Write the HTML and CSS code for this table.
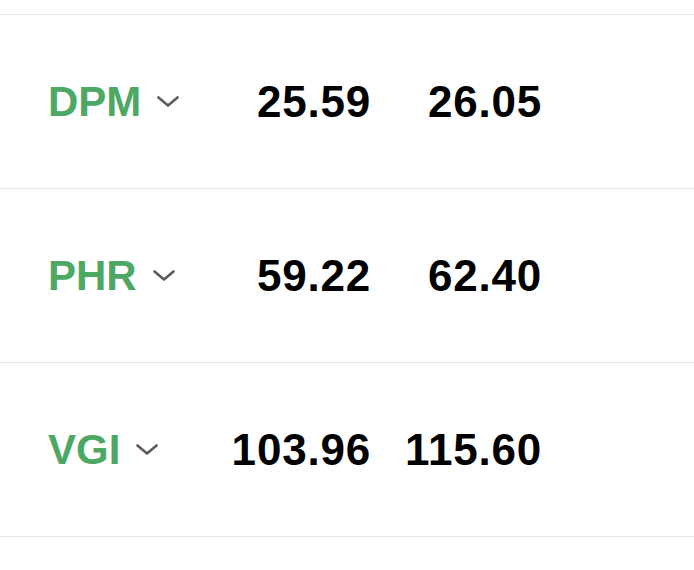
FILE: index.html
```html
<!DOCTYPE html>
<html>
<head>
<meta charset="utf-8">
<link rel="stylesheet" href="styles.css">
</head>
<body>
<div class="list">
  <div class="row">
    <div class="ticker"><span class="sym">DPM</span><svg class="chev" viewBox="0 0 22 11" width="22" height="11"><path d="M1.5 1.5 L11 9.5 L20.5 1.5" /></svg></div>
    <div class="num">25.59</div>
    <div class="num">26.05</div>
  </div>
  <div class="row">
    <div class="ticker"><span class="sym">PHR</span><svg class="chev" viewBox="0 0 22 11" width="22" height="11"><path d="M1.5 1.5 L11 9.5 L20.5 1.5" /></svg></div>
    <div class="num">59.22</div>
    <div class="num">62.40</div>
  </div>
  <div class="row">
    <div class="ticker"><span class="sym">VGI</span><svg class="chev" viewBox="0 0 22 11" width="22" height="11"><path d="M1.5 1.5 L11 9.5 L20.5 1.5" /></svg></div>
    <div class="num">103.96</div>
    <div class="num">115.60</div>
  </div>
</div>
</body>
</html>
```

FILE: styles.css
```css
html, body {
  margin: 0;
  padding: 0;
  background: #ffffff;
}
body {
  font-family: "Liberation Sans", Arial, sans-serif;
}
.list {
  padding-top: 14px;
}
.row {
  display: grid;
  grid-template-columns: 150px 173px 171px;
  align-items: center;
  height: 173px;
  padding-left: 48px;
  border-top: 1px solid #e6e6e6;
}
.row:last-child {
  border-bottom: 1px solid #e6e6e6;
}
.ticker {
  display: flex;
  align-items: center;
  gap: 16px;
}
.sym {
  color: #4ca862;
  font-weight: 700;
  font-size: 42px;
  line-height: 1;
}
.chev {
  fill: none;
  stroke: #5c5c60;
  stroke-width: 2.6;
  stroke-linecap: round;
  stroke-linejoin: round;
}
.num {
  text-align: right;
  color: #000000;
  font-weight: 700;
  font-size: 44px;
  letter-spacing: 0.8px;
  line-height: 1;
}
```
